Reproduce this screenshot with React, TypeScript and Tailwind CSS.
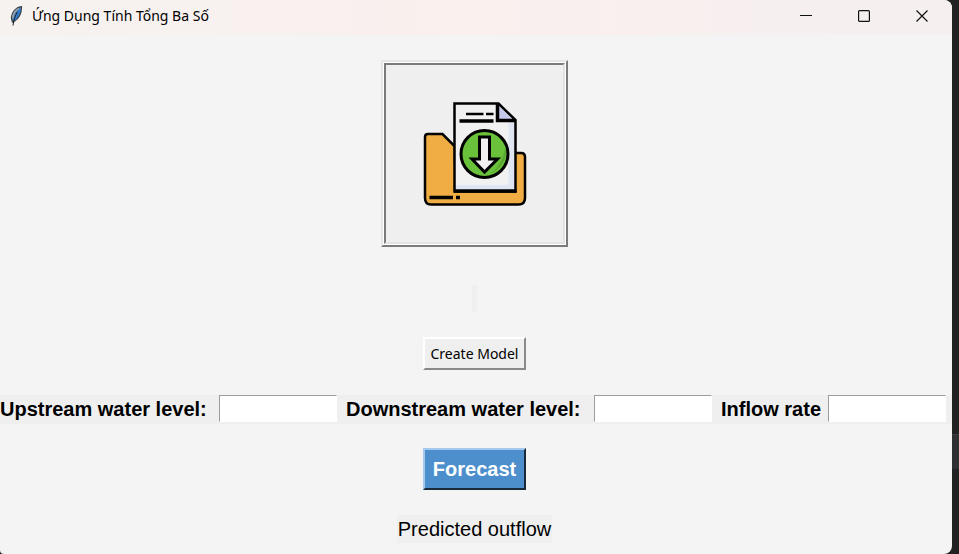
import React from "react";

function Feather() {
  return (
    <svg width="16" height="20" viewBox="0 0 16 20" aria-hidden="true">
      <path d="M13.500 0.600C8.500 1 3.600 5.800 3.400 11.600L4.400 16L6 15.600C10.800 12.600 13.600 8 13.500 0.600Z" fill="#4a7fb8" stroke="#3c4148" strokeWidth="1.2" />
      <path d="M11 2.400C7.600 4 5 8 4.800 12.400" fill="none" stroke="#9aa3ad" strokeWidth="1.600" />
      <path d="M12 3.600C10.800 8 8.400 11.400 6 14" fill="none" stroke="#2b7bd2" strokeWidth="2" />
      <path d="M9.400 6C7 10 5.600 14 5 19.600" fill="none" stroke="#1c1f24" strokeWidth="1" />
    </svg>
  );
}

function FolderDownload() {
  return (
    <svg width="104" height="104" viewBox="0 0 104 104" aria-hidden="true">
      <path d="M2 35Q2 32 5 32H19.500L32 44.500V60H90V51H98Q102 51 102 55V96Q102 102.500 95.500 102.500H8Q2 102.500 2 96Z" fill="#f0ad43" stroke="#000" strokeWidth="2.500" />
      <path d="M31.500 2H75L92.500 19V89H31.500Z" fill="#f1f1f1" />
      <path d="M85.500 19H92V88H32V83H82Q85.500 83 85.500 79Z" fill="#dfe5f3" />
      <path d="M75 3.500V18.500H91Z" fill="#c5caec" />
      <path d="M31.500 1.500H75.500L92.500 18V89.500H31.500Z" fill="none" stroke="#000" strokeWidth="2.500" />
      <path d="M31 89H93.500" stroke="#000" strokeWidth="3.500" />
      <path d="M74.500 2V18.500H92" fill="none" stroke="#000" strokeWidth="3.500" />
      <path d="M43 12H60.500M63 12H70.500" stroke="#000" strokeWidth="2.500" />
      <path d="M36.500 19H70.500" stroke="#000" strokeWidth="3.500" />
      <circle cx="61.500" cy="52" r="23.500" fill="#6ac23b" stroke="#000" strokeWidth="3" />
      <path d="M82.500 44Q86 62 67 72.500Q80 62 82.500 44Z" fill="#5aa832" />
      <path d="M56.500 35H66.500V57H74.500L61.500 70L49 57H56.500Z" fill="#f1f1f1" stroke="#000" strokeWidth="3" />
      <path d="M6.500 95.500H30M33 95.500H37" stroke="#000" strokeWidth="3.500" />
    </svg>
  );
}

function WindowButton({ label, children }: { label: string; children: React.ReactNode }) {
  return (
    <button type="button" aria-label={label} className="flex h-8 w-[58px] items-center justify-center">
      <svg width="12" height="12" viewBox="0 0 12 12" fill="none" stroke="#111" strokeWidth="1.200">
        {children}
      </svg>
    </button>
  );
}

const fields = [
  { id: "upstream", label: "Upstream water level:", width: "w-[219px]", pad: "" },
  { id: "downstream", label: "Downstream water level:", width: "w-[257px]", pad: "pl-[9px]" },
  { id: "inflow", label: "Inflow rate", width: "w-[116px]", pad: "pl-[9px]" },
];

function Field({ id, label, width, pad }: (typeof fields)[number]) {
  return (
    <div className="flex">
      <label htmlFor={id} className={`${width} ${pad} shrink-0 whitespace-nowrap text-xl leading-7 font-bold`}>
        {label}
      </label>
      <input
        id={id}
        className="h-[27px] w-[118px] rounded-none border border-t-[#9c9c9c] border-r-white border-b-white border-l-[#9c9c9c] bg-white px-1 text-base outline-none"
      />
    </div>
  );
}

export default function App() {
  return (
    <div className="flex min-h-screen bg-[#222] font-['Liberation_Sans',Arial,sans-serif] text-black">
      <div className="flex flex-1 flex-col overflow-hidden rounded-r-lg rounded-bl-sm bg-[#f4f4f4]">
        <header className="flex h-[35px] items-start justify-between bg-gradient-to-r from-[#f6f2f0] via-[#faf0ee] to-[#f5eff0]">
          <div className="flex h-8 items-center gap-2 pl-2 font-['Noto_Sans','Segoe_UI',sans-serif] text-sm">
            <Feather />
            <h1>Ứng Dụng Tính Tổng Ba Số</h1>
          </div>
          <div className="flex pr-px">
            <WindowButton label="Minimize">
              <path d="M0 5.500H12" />
            </WindowButton>
            <WindowButton label="Maximize">
              <rect x="0.600" y="0.600" width="10.800" height="10.800" rx="1" />
            </WindowButton>
            <WindowButton label="Close">
              <path d="M0.500 0.500L11.500 11.500M11.500 0.500L0.500 11.500" />
            </WindowButton>
          </div>
        </header>

        <main className="flex flex-1 flex-col items-center pt-[25px]">
          <div className="flex flex-col items-center pr-[3px]">
            <button
              type="button"
              aria-label="Open file"
              className="border-2 border-t-[#e6e6e6] border-r-[#7b7b7b] border-b-[#7b7b7b] border-l-[#e6e6e6] bg-white p-px"
            >
              <span className="flex size-[181px] items-center justify-center border-2 border-t-[#7b7b7b] border-r-[#e3e3e3] border-b-[#e3e3e3] border-l-[#7b7b7b] bg-[#efefef]">
                <FolderDownload />
              </span>
            </button>
            <output className="mt-[38px] h-[27px] w-[5px] bg-[#efefef]" />
            <button
              type="button"
              className="mt-[25px] h-[33px] w-[103px] border-2 border-t-white border-r-[#8a8a8a] border-b-[#8a8a8a] border-l-white bg-[#efefef] font-['Noto_Sans','Segoe_UI',sans-serif] text-sm whitespace-nowrap"
            >
              Create Model
            </button>
          </div>

          <div className="mt-[25px] flex w-full bg-[#efefef] pb-px">
            {fields.map((field) => (
              <Field key={field.id} {...field} />
            ))}
          </div>

          <div className="flex flex-col items-center pt-6 pr-[3px]">
            <button
              type="button"
              className="h-[42px] w-[103px] border-2 border-t-[#a3c9ee] border-r-[#1b2a38] border-b-[#1b2a38] border-l-[#a3c9ee] bg-[#4d8fcc] text-xl leading-7 font-bold text-white"
            >
              Forecast
            </button>
            <p className="mt-[25px] bg-[#efefef] px-px text-xl leading-7">Predicted outflow</p>
          </div>
        </main>
      </div>
      <aside className="flex w-[7px] flex-col bg-[#222]">
        <div className="mt-[434px] h-[35px] border-t border-[#3a3c3e] bg-[#2e3032]" />
      </aside>
    </div>
  );
}
